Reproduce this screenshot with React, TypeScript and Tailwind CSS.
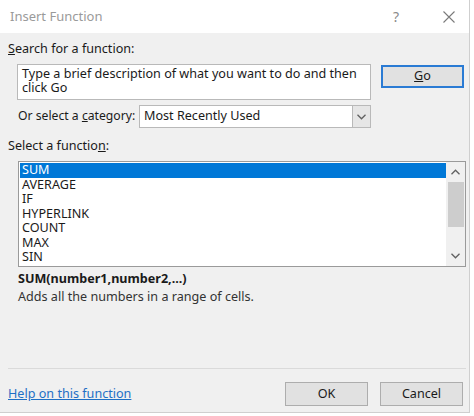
import React from 'react';

const FONT = { fontFamily: '"Segoe UI", "Noto Sans", "Open Sans", sans-serif' };

const functions = ['SUM', 'AVERAGE', 'IF', 'HYPERLINK', 'COUNT', 'MAX', 'SIN'];

function Chevron({ up = false }: { up?: boolean }) {
  return (
    <svg width="9" height="6" viewBox="0 0 9 6" className={up ? 'rotate-180' : ''}>
      <path d="M0.5 0.8 L4.5 4.8 L8.5 0.8" fill="none" stroke="#606060" strokeWidth="1.3" />
    </svg>
  );
}

export default function App() {
  return (
    <div className="w-[474px] h-[416px] bg-white text-[12.6px] text-[#1a1a1a]" style={FONT}>
      <div className="w-[470px] h-[413px] border-r border-b border-[#cfcfcf] flex flex-col">
        {/* title bar */}
        <div className="h-[33px] bg-white flex items-center shrink-0">
          <span className="ml-[10px] text-[13px] text-[#9a9a9a]">Insert Function</span>
          <span className="ml-auto mr-[44px] text-[14px] text-[#8a8a8a]">?</span>
          <svg width="12" height="12" viewBox="0 0 12 12" className="mr-[14px]">
            <path d="M0.5 0.5 L11.5 11.5 M11.5 0.5 L0.5 11.5" stroke="#7a7a7a" strokeWidth="1.1" />
          </svg>
        </div>

        <div className="flex-1 bg-[#f0f0f0] flex flex-col">
          <div className="ml-[8px] mt-[8px] h-[16px] leading-[16px]">
            <span className="underline">S</span>earch for a function:
          </div>

          <div className="flex mt-[7px]">
            <div className="ml-[17px] w-[354px] h-[36px] bg-white border border-[#b9b9b9] px-[4px] pt-[2px] leading-[14px]">
              Type a brief description of what you want to do and then click Go
            </div>
            <button className="ml-[10px] mt-[1px] w-[83px] h-[23px] bg-[#e1e1e1] border-2 border-[#2a7bd4] flex items-center justify-center">
              <span className="underline">G</span>o
            </button>
          </div>

          <div className="flex items-center mt-[5px]">
            <span className="ml-[18px] w-[121px] whitespace-nowrap text-[12.2px]">
              Or select a <span className="underline">c</span>ategory:
            </span>
            <div className="w-[232px] h-[23px] bg-white border border-[#b9b9b9] flex items-center">
              <span className="ml-[4px]">Most Recently Used</span>
              <div className="ml-auto w-[18px] h-full bg-[#e6e6e6] border-l border-[#b9b9b9] flex items-center justify-center">
                <Chevron />
              </div>
            </div>
          </div>

          <div className="ml-[8px] mt-[10px] h-[16px] leading-[16px]">
            Select a functio<span className="underline">n</span>:
          </div>

          <div className="ml-[18px] mt-[7px] w-[448px] h-[106px] bg-white border border-[#9a9a9a] flex">
            <div className="flex-1 pt-[1px] pl-[1px]">
              {functions.map((f, i) => (
                <div
                  key={f}
                  className={`h-[14.5px] leading-[14.5px] pl-[2px] ${i === 0 ? 'bg-[#0078d7] text-white' : ''}`}
                >
                  {f}
                </div>
              ))}
            </div>
            <div className="w-[19px] bg-[#f0f0f0] flex flex-col items-center">
              <div className="h-[20px] flex items-center justify-center">
                <Chevron up />
              </div>
              <div className="w-[16px] h-[45px] bg-[#cdcdcd]" />
              <div className="mt-auto h-[20px] flex items-center justify-center">
                <Chevron />
              </div>
            </div>
          </div>

          <div className="ml-[18px] mt-[4px] h-[16px] leading-[16px] font-bold">SUM(number1,number2,...)</div>
          <div className="ml-[18px] mt-[2px] h-[16px] leading-[16px] text-[#333]">
            Adds all the numbers in a range of cells.
          </div>

          <div className="ml-[8px] mt-[63px] w-[458px] h-px bg-[#dadada]" />

          <div className="flex items-center mt-[13px]">
            <span className="ml-[8px] text-[#1f6fc5] underline">Help on this function</span>
            <button className="ml-auto w-[83px] h-[24px] bg-[#e1e1e1] border border-[#adadad]">OK</button>
            <button className="ml-[12px] mr-[6px] w-[83px] h-[24px] bg-[#e1e1e1] border border-[#adadad]">
              Cancel
            </button>
          </div>
        </div>
      </div>
    </div>
  );
}
